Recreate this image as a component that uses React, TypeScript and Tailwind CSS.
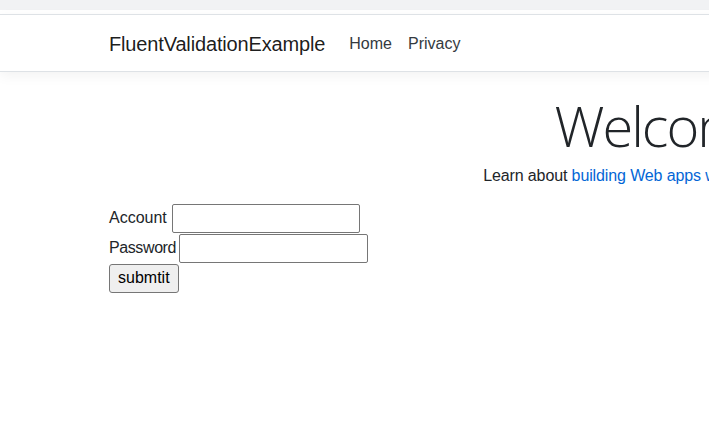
export default function App() {
  return (
    <div className="w-full h-[429px] overflow-hidden bg-white text-[#212529] font-['Segoe_UI','Liberation_Sans',sans-serif]">
      <div className="w-[1328px]">
        {/* strip above the header */}
        <div className="h-[10px] bg-[#f1f2f4]" />
        <div className="h-[4px] bg-white" />

        {/* navbar */}
        <header className="border-y border-[#dee2e6] bg-white shadow-[0_4px_12px_rgba(0,0,0,0.05)] mb-4">
          <nav className="w-[1140px] mx-auto px-[15px] pt-[9px] pb-[7px] flex items-center">
            <a className="text-[20px] leading-[30px] py-[5px] mr-4 tracking-[-0.15px] text-[rgba(0,0,0,0.9)]">FluentValidationExample</a>
            <ul className="flex">
              <li>
                <a className="block px-2 py-2 text-base leading-6 text-[#343a40]">Home</a>
              </li>
              <li>
                <a className="block px-2 py-2 text-base leading-6 text-[#343a40]">Privacy</a>
              </li>
            </ul>
          </nav>
        </header>

        <div className="w-[1140px] mx-auto px-[15px]">
          <main className="pb-4">
            <div className="text-center">
              <h1 className="text-[56px] leading-[67px] pt-[4px] mb-[5px] font-light tracking-[-2px] font-['Segoe_UI','Open_Sans',sans-serif]">Welcome</h1>
              <p className="text-base leading-6 mb-[15px] tracking-[-0.12px]">
                Learn about <a className="text-[#0366d6]">building Web apps with ASP.NET Core</a>.
              </p>
            </div>

            <form className="text-base leading-6">
              <div className="flex items-center h-[30px]">
                <label>Account</label>
                <input type="text" className="ml-[5px] w-[188px] h-[29px] border border-[#767676] rounded-[2px] px-[2px] bg-white" />
              </div>
              <div className="flex items-center h-[30px]">
                <label className="tracking-[-0.4px]">Password</label>
                <input type="password" className="ml-[3px] w-[189px] h-[29px] border border-[#767676] rounded-[2px] px-[2px] bg-white" />
              </div>
              <div className="flex items-center h-[30px]">
                <button type="button" className="h-[29px] px-[8px] border border-[#767676] rounded-[3px] bg-[#efefef] text-[#000]">
                  submtit
                </button>
              </div>
            </form>
          </main>
        </div>
      </div>
    </div>
  );
}
